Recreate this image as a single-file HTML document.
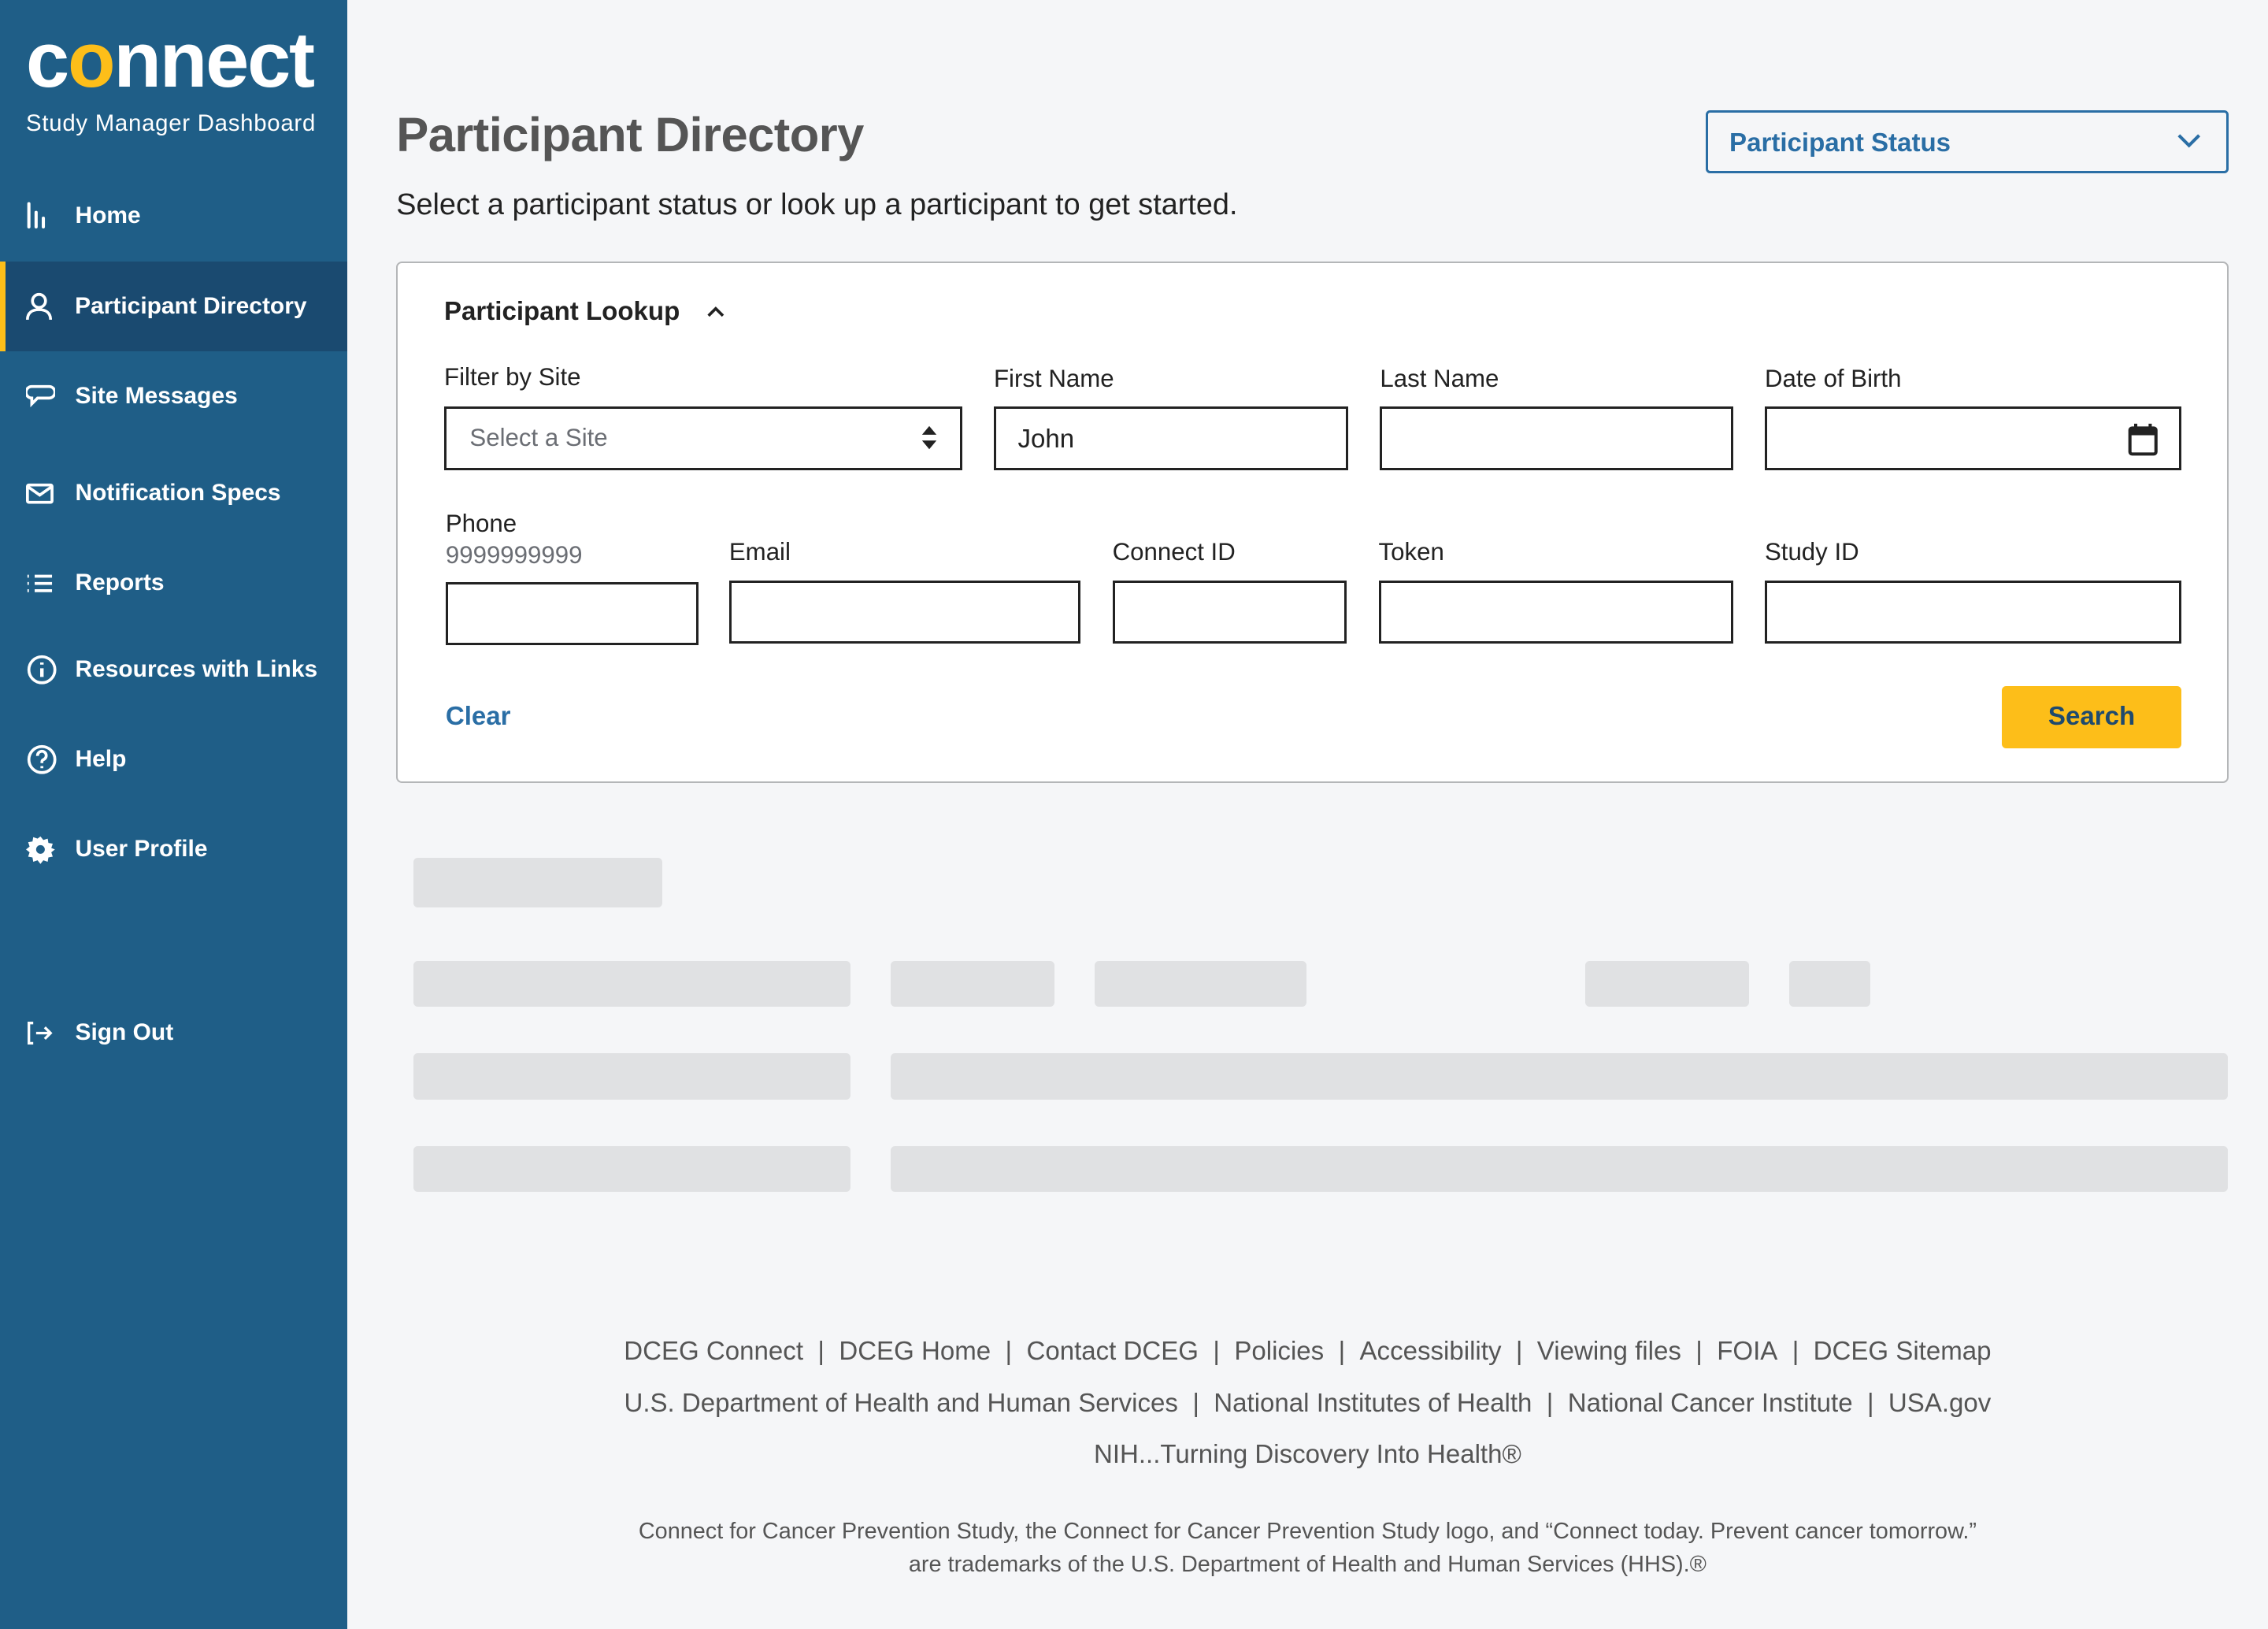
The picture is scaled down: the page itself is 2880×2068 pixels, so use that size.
<!DOCTYPE html>
<html><head><meta charset="utf-8"><style>
*{box-sizing:border-box;margin:0;padding:0}
html,body{width:2880px;height:2068px;overflow:hidden;background:#f5f6f8}
#root{zoom:1.83673;width:1568px;height:1126px;position:relative;font-family:"Liberation Sans",sans-serif;}
.side{position:absolute;left:0;top:0;width:240px;height:1126px;background:#1f5e87;color:#fff}
.logo{position:absolute;left:18px;top:12px;font-weight:bold;font-size:54px;letter-spacing:-1.2px;line-height:60px}
.logo .o{color:#fdbe19}
.sub{position:absolute;left:18px;top:76px;font-size:16px;letter-spacing:.4px}
.nav{position:absolute;left:0;width:240px;height:62px;display:flex;align-items:center;font-weight:bold;font-size:16.3px}
.nav svg{position:absolute;left:18px}
.nav span{position:absolute;left:52px}
.act{background:#1a4a70;border-left:4px solid #fdbe19}
.abs{position:absolute}
h1{position:absolute;left:274px;top:74px;font-size:33.5px;color:#555;font-weight:bold;letter-spacing:-.3px}
.lead{position:absolute;left:274px;top:130px;font-size:20.6px;color:#222}
.ps{position:absolute;left:1179px;top:76px;width:362px;height:44px;border:2px solid #2a6ea5;border-radius:3px;color:#2a6ea5;font-weight:bold;font-size:18px;padding:11px 15px}
.card{position:absolute;left:274px;top:181px;width:1267px;height:360px;background:#fff;border:1.5px solid #b4b6b8;border-radius:4px}
.lbl{position:absolute;font-size:17px;color:#222}
.in{position:absolute;border:2px solid #222;background:#fff;height:44px}
.sk{position:absolute;background:#e0e1e3;border-radius:3px}
.ft{position:absolute;left:240px;width:1328px;text-align:center;color:#555;font-size:18px}
.ft b{font-weight:normal;margin:0 10px}
</style></head><body><div id="root">
<div class="side">
 <div class="logo">c<span class="o">o</span>nnect</div>
 <div class="sub">Study Manager Dashboard</div>
 <div class="nav" style="top:118px"><svg width="18" height="20" viewBox="0 0 18 20"><path d="M2 2v16M7 8v10M12 12v6" stroke="#fff" stroke-width="2.2" stroke-linecap="round"/></svg><span>Home</span></div>
 <div class="nav act" style="top:181px"><svg width="18" height="20" viewBox="0 0 18 20" style="left:14px"><circle cx="9" cy="6" r="4.5" fill="none" stroke="#fff" stroke-width="2"/><path d="M1 19c0-5 3.5-7 8-7s8 2 8 7" fill="none" stroke="#fff" stroke-width="2"/></svg><span style="left:48px">Participant Directory</span></div>
 <div class="nav" style="top:243px"><svg width="20" height="18" viewBox="0 0 20 18"><path d="M4 2h12a3 3 0 0 1 0 8h-8l-4 4v-4a3 3 0 0 1 0-8z" fill="none" stroke="#fff" stroke-width="2"/></svg><span>Site Messages</span></div>
 <div class="nav" style="top:310px"><svg width="20" height="16" viewBox="0 0 20 16"><rect x="1" y="2" width="17" height="12" rx="1" fill="none" stroke="#fff" stroke-width="2"/><path d="M1 3l8.5 6 8.5-6" fill="none" stroke="#fff" stroke-width="2"/></svg><span>Notification Specs</span></div>
 <div class="nav" style="top:372px"><svg width="20" height="16" viewBox="0 0 20 16"><path d="M1 3h1M1 8h1M1 13h1M6 3h12M6 8h12M6 13h12" stroke="#fff" stroke-width="2"/></svg><span>Reports</span></div>
 <div class="nav" style="top:432px"><svg width="22" height="22" viewBox="0 0 22 22"><circle cx="11" cy="11" r="9" fill="none" stroke="#fff" stroke-width="2"/><path d="M11 10v6M11 6v1.5" stroke="#fff" stroke-width="2.4"/></svg><span>Resources with Links</span></div>
 <div class="nav" style="top:494px"><svg width="22" height="22" viewBox="0 0 22 22"><circle cx="11" cy="11" r="9" fill="none" stroke="#fff" stroke-width="2"/><path d="M8 8.5a3 3 0 1 1 4 2.6c-1 .5-1 1-1 2.4M11 15.5v1.5" fill="none" stroke="#fff" stroke-width="2"/></svg><span>Help</span></div>
 <div class="nav" style="top:556px"><svg width="20" height="20" viewBox="0 0 20 20"><path d="M10 1l2 2.5 3-1 .5 3 3 .5-1 3L20 10l-2.5 2 1 3-3 .5-.5 3-3-1L10 20l-2-2.5-3 1-.5-3-3-.5 1-3L0 10l2.5-2-1-3 3-.5.5-3 3 1z" fill="#fff"/><circle cx="10" cy="10" r="3" fill="#1f5e87"/></svg><span>User Profile</span></div>
 <div class="nav" style="top:683px"><svg width="20" height="18" viewBox="0 0 20 18"><path d="M5 2H2v14h3M7 9h10M13 5l4 4-4 4" fill="none" stroke="#fff" stroke-width="1.8"/></svg><span>Sign Out</span></div>
</div>

<h1>Participant Directory</h1>
<div class="lead">Select a participant status or look up a participant to get started.</div>
<div class="ps">Participant Status<svg class="abs" style="right:18px;top:15px" width="16" height="10" viewBox="0 0 16 10"><path d="M1 1l7 7 7-7" fill="none" stroke="#2a6ea5" stroke-width="2.2"/></svg></div>

<div class="card">
 <div class="abs" style="left:32px;top:23px;font-weight:bold;font-size:18px;color:#222">Participant Lookup</div>
 <svg class="abs" style="left:213px;top:29px" width="14" height="9" viewBox="0 0 14 9"><path d="M2 7l5-5 5 5" fill="none" stroke="#222" stroke-width="2"/></svg>
 <div class="lbl" style="left:32px;top:69px">Filter by Site</div>
 <div class="lbl" style="left:412px;top:70px">First Name</div>
 <div class="lbl" style="left:679px;top:70px">Last Name</div>
 <div class="lbl" style="left:945px;top:70px">Date of Birth</div>
 <div class="in" style="left:32px;top:99px;width:358px"><span class="abs" style="left:16px;top:10px;font-size:17px;color:#6b6e74">Select a Site</span><svg class="abs" style="right:15px;top:11px" width="12" height="18" viewBox="0 0 12 18"><path d="M6 1l5 6H1zM6 17l5-6H1z" fill="#222"/></svg></div>
 <div class="in" style="left:412px;top:99px;width:245px"><span class="abs" style="left:15px;top:11px;font-size:18px;color:#222">John</span></div>
 <div class="in" style="left:679px;top:99px;width:244px"></div>
 <div class="in" style="left:945px;top:99px;width:288px"><svg class="abs" style="right:14px;top:9px" width="22" height="24" viewBox="0 0 22 24"><rect x="2" y="4" width="18" height="18" rx="1.5" fill="none" stroke="#222" stroke-width="2.2"/><rect x="2" y="4" width="18" height="5" fill="#222"/><path d="M6 1v5M16 1v5" stroke="#222" stroke-width="2.2"/></svg></div>

 <div class="lbl" style="left:33px;top:170px">Phone</div>
 <div class="lbl" style="left:33px;top:192px;color:#6b6e74">9999999999</div>
 <div class="lbl" style="left:229px;top:190px">Email</div>
 <div class="lbl" style="left:494px;top:190px">Connect ID</div>
 <div class="lbl" style="left:678px;top:190px">Token</div>
 <div class="lbl" style="left:945px;top:190px">Study ID</div>
 <div class="in" style="left:33px;top:220px;width:175px"></div>
 <div class="in" style="left:229px;top:219px;width:243px"></div>
 <div class="in" style="left:494px;top:219px;width:162px"></div>
 <div class="in" style="left:678px;top:219px;width:245px"></div>
 <div class="in" style="left:945px;top:219px;width:288px"></div>
 <div class="abs" style="left:33px;top:303px;font-weight:bold;font-size:18px;color:#2a6ea5">Clear</div>
 <div class="abs" style="left:1109px;top:292px;width:124px;height:43px;background:#fdbe19;border-radius:3px;color:#1f4a6e;font-weight:bold;font-size:18px;text-align:center;line-height:43px">Search</div>
</div>

<div class="sk" style="left:286px;top:593px;width:172px;height:34px"></div>
<div class="sk" style="left:286px;top:664px;width:302px;height:32px"></div>
<div class="sk" style="left:616px;top:664px;width:113px;height:32px"></div>
<div class="sk" style="left:757px;top:664px;width:146px;height:32px"></div>
<div class="sk" style="left:1096px;top:664px;width:113px;height:32px"></div>
<div class="sk" style="left:1237px;top:664px;width:56px;height:32px"></div>
<div class="sk" style="left:286px;top:728px;width:302px;height:32px"></div>
<div class="sk" style="left:616px;top:728px;width:924px;height:32px"></div>
<div class="sk" style="left:286px;top:792px;width:302px;height:32px"></div>
<div class="sk" style="left:616px;top:792px;width:924px;height:32px"></div>

<div class="ft" style="top:924px">DCEG Connect<b>|</b>DCEG Home<b>|</b>Contact DCEG<b>|</b>Policies<b>|</b>Accessibility<b>|</b>Viewing files<b>|</b>FOIA<b>|</b>DCEG Sitemap</div>
<div class="ft" style="top:960px">U.S. Department of Health and Human Services<b>|</b>National Institutes of Health<b>|</b>National Cancer Institute<b>|</b>USA.gov</div>
<div class="ft" style="top:995px">NIH...Turning Discovery Into Health®</div>
<div class="ft" style="top:1047px;font-size:15.7px;line-height:23px">Connect for Cancer Prevention Study, the Connect for Cancer Prevention Study logo, and “Connect today. Prevent cancer tomorrow.”<br>are trademarks of the U.S. Department of Health and Human Services (HHS).®</div>
</div></body></html>
